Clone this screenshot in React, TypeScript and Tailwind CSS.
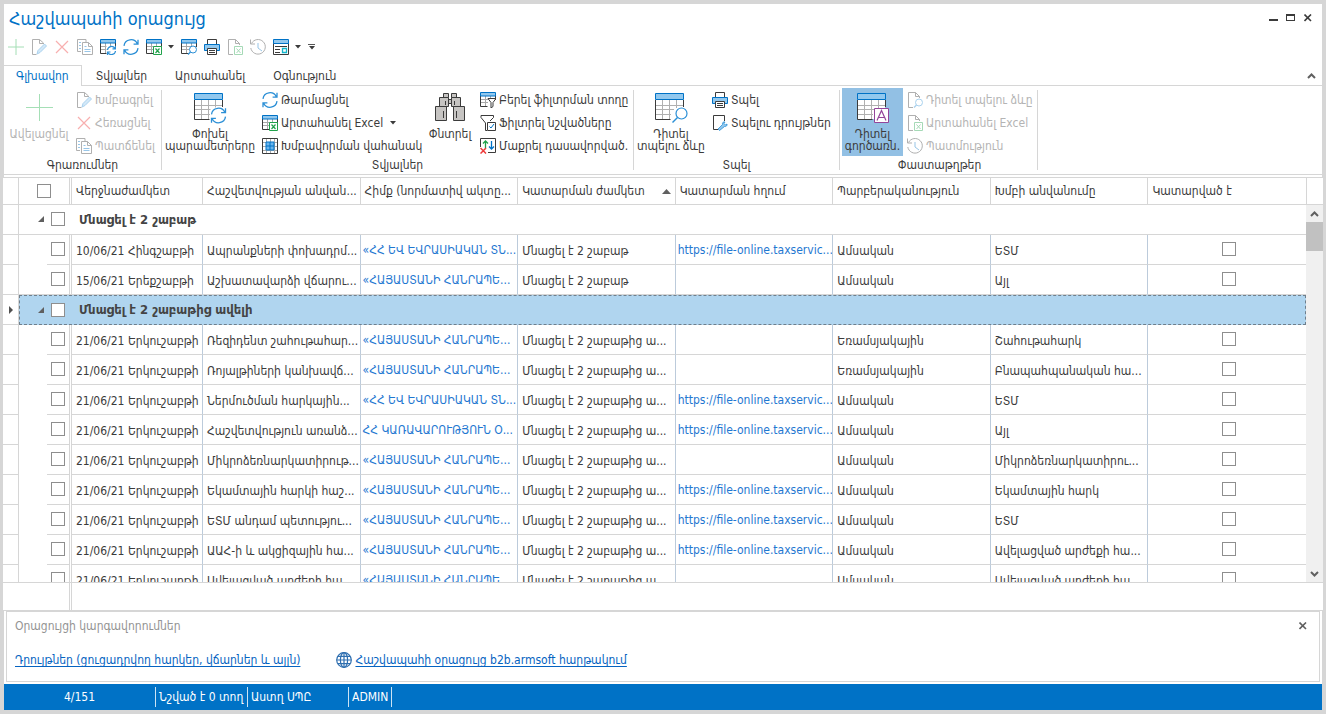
import React, { useState } from 'react';
import clsx from 'clsx';

const INK = '#3b3b3b';
const BLUE = '#0072c6';
const SKY = '#92c8ee';
const ARC = '#2b8fd6';

type IconProps = { className?: string };

const Svg: React.FC<{ size?: number; className?: string; children: React.ReactNode }> = ({
  size = 16,
  className = '',
  children,
}) => (
  <svg
    width={size}
    height={size}
    viewBox={`0 0 ${size} ${size}`}
    fill="none"
    stroke={INK}
    aria-hidden="true"
    className={clsx('shrink-0', className)}
  >
    {children}
  </svg>
);

const SyncArrows = () => (
  <g stroke={ARC} strokeWidth="1.3">
    <path d="M1 6.8A7 7 0 0 1 14.3 4.8M15 .8v4.4h-4.4" />
    <path d="M15 9.2A7 7 0 0 1 1.7 11.2M1 15.2v-4.4h4.4" />
  </g>
);

const SmallTable = () => (
  <>
    <path d="M5.5 4v10M10.5 4v4M1 7.5h14M1 10.5h7" stroke="#a9a9a9" />
    <path d="M.5 4v10.5h7M15.5 4v4" />
    <path d="M.5 .5h15v3.5h-15z" fill={SKY} stroke={BLUE} />
  </>
);

const BigTable = () => (
  <>
    <path d="M8.5 9v19M15.5 9v19M22.5 9v8M2 14.5h27M2 18.5h18M2 23.5h15" stroke="#b0b0b0" />
    <path d="M1.5 9v19.500h15M29.500 9v7" />
    <path d="M1.500 2.500h28v6h-28z" fill={SKY} stroke={BLUE} />
  </>
);

const PlusIcon = () => (
  <Svg>
    <path d="M8 0v16M0 8h16" stroke="#21b04b" />
  </Svg>
);

const BigPlusIcon = () => (
  <Svg size={32}>
    <path d="M16.500 3v27M3 16.500h27" stroke="#21b04b" />
  </Svg>
);

const EditIcon = () => (
  <Svg>
    <path d="M12.500 5v-1l-4-3.500h-7v15h4" />
    <path d="M8.500 .5v4h4" />
    <path d="M6 15l1-3.500 6.500-6.500 2 2-6.500 6.500z" fill={SKY} stroke={ARC} />
  </Svg>
);

const CrossIcon = () => (
  <Svg>
    <path d="M2 2l12 12M14 2L2 14" stroke="#ee3a3a" strokeWidth="1.200" />
  </Svg>
);

const CopyIcon = () => (
  <Svg>
    <path d="M9 3.500V.5H.5v12H4" />
    <path d="M2 3.500h2M2 6.500h2M2 9.500h2" stroke={BLUE} />
    <path d="M5.500 3.500h6l4 4v8h-10zM11.500 3.500v4h4" />
    <path d="M7.500 7.500h2M7.500 10.500h6M7.500 12.500h6" stroke={BLUE} />
  </Svg>
);

const TableSyncIcon = () => (
  <Svg>
    <SmallTable />
    <path d="M6.500 7H16v9H6.500z" fill="#fff" stroke="none" />
    <g stroke={ARC} strokeWidth="1.200">
      <path d="M7.500 11a4 4 0 0 1 7.300-1.800M15.500 6.800v3h-3" />
      <path d="M15.500 12a4 4 0 0 1-7.300 1.800M7.500 16v-3h3" />
    </g>
  </Svg>
);

const SyncIcon = () => (
  <Svg>
    <SyncArrows />
  </Svg>
);

const TableExcelIcon = () => (
  <Svg>
    <SmallTable />
    <path d="M7.500 7.500h8v8h-8z" fill="#fff" stroke="#21a24b" />
    <path d="M9.500 9.500l4 4.500M13.500 9.500l-4 4.500" stroke="#21a24b" strokeWidth="1.200" />
  </Svg>
);

const TablePreviewIcon = () => (
  <Svg>
    <SmallTable />
    <circle cx="12" cy="10.500" r="3.500" fill="#fff" stroke={ARC} />
    <path d="M9.500 13l-2.500 2.500" stroke={ARC} strokeWidth="1.300" />
  </Svg>
);

const TableFilterIcon = () => (
  <Svg>
    <SmallTable />
    <path d="M8 6.500h8l-3 4v4l-2 1.500v-5.500z" fill="#fff" />
  </Svg>
);

const PrintIcon = () => (
  <Svg>
    <path d="M3.500 5V.5h9V5" />
    <path d="M.5 5.500h15v6h-15z" fill={SKY} stroke={BLUE} />
    <path d="M3.500 9.500h9v6h-9z" fill="#fff" />
    <path d="M5 11.500h6M5 13.500h6" />
  </Svg>
);

const FileExcelIcon = () => (
  <Svg>
    <path d="M6 15.500H1.500V.5h7l4 4V6M8.500 .5v4h4" />
    <path d="M7.500 7.500h8v8h-8z" fill="#fff" stroke="#21a24b" />
    <path d="M9.500 9.500l4 4.500M13.500 9.500l-4 4.500" stroke="#21a24b" />
  </Svg>
);

const FilePreviewIcon = () => (
  <Svg>
    <path d="M6 15.500H1.500V.5h7l4 4V6M8.500 .5v4h4" />
    <circle cx="12" cy="10.500" r="3.500" stroke={ARC} />
    <path d="M9.500 13L7 15.500" stroke={ARC} strokeWidth="1.300" />
  </Svg>
);

const HistoryIcon = () => (
  <Svg>
    <path d="M1.500 4.500A7.300 7.300 0 1 1 .8 9M.5 .5v4.500H5" />
    <path d="M8 4v5l4 3" stroke={BLUE} />
  </Svg>
);

const CardIcon = () => (
  <Svg>
    <path d="M.5 4v11.500h15V4M2 7.500h12M2 10.500h5M2 13.500h5" />
    <path d="M.5 .5h15v4h-15z" fill={SKY} stroke={BLUE} />
    <path d="M9.500 9.500h4v4h-4z" fill="#fff" stroke="#12b5cb" strokeWidth="1.300" />
  </Svg>
);

const GroupPanelIcon = () => (
  <Svg>
    <path d="M4.500 0v16M8.500 0v16M12.500 0v16M0 4.500h16M0 8.500h16M0 12.500h16" stroke="#a9a9a9" />
    <path d="M.5 .5h15v15H.5z" />
    <path d="M4 4h8v8H4z" fill="#6bb5ec" stroke={BLUE} />
    <path d="M8 4v8M4 8h8" stroke={BLUE} />
  </Svg>
);

const FilterCheckIcon = () => (
  <Svg>
    <path d="M7 15.500H5.500V8L1 2.500V.5h12.500v2L10 6" />
    <path d="M7.500 7.500h8v8h-8z" fill="#fff" />
    <path d="M9.500 11.500l1.500 1.500 3-4" stroke={BLUE} />
  </Svg>
);

const ClearSortIcon = () => (
  <Svg>
    <path d="M.5 9V.5h15v14H8" />
    <path d="M5.500 10V3M3 5.500L5.500 3 8 5.500" stroke="#21a24b" strokeWidth="1.300" />
    <path d="M11.500 3v8M9 8.500l2.500 2.500L14 8.500" stroke={BLUE} strokeWidth="1.300" />
    <path d="M.5 10l5.500 5.500M6 10L.5 15.500" stroke="#ee3a3a" strokeWidth="1.500" />
  </Svg>
);

const PageSetupIcon = () => (
  <Svg>
    <path d="M6 14.500H1.500V.5h11V6" />
    <path
      d="M7.500 15.500l-1.500-1.500 4.500-4.500c-.5-2 1-3 2.500-2.500l-1 1.500 1.500 1.500 1.500-1c.5 1.500-1 3-2.500 2.500z"
      fill={SKY}
      stroke={ARC}
      strokeWidth=".8"
    />
  </Svg>
);

const BigTableSyncIcon = () => (
  <Svg size={34}>
    <BigTable />
    <g transform="translate(17.500 16.500)">
      <rect width="16" height="16" fill="#fff" stroke="none" />
      <SyncArrows />
    </g>
  </Svg>
);

const BigTablePreviewIcon = () => (
  <Svg size={34}>
    <BigTable />
    <circle cx="27.500" cy="22.500" r="5.500" fill="#fff" stroke={ARC} strokeWidth="1.200" />
    <path d="M23.500 26.500l-5 5" stroke={ARC} strokeWidth="1.500" />
  </Svg>
);

const BigTableLetterIcon = () => (
  <Svg size={34}>
    <path d="M2 9h27v19H2z" fill="#fff" stroke="none" />
    <BigTable />
    <path d="M18.500 17.500h14v14h-14z" fill="#fff" stroke="#93459a" />
    <path d="M21 29.500l4.500-10 4.500 10M22.500 26.500h6" stroke="#93459a" strokeWidth="1.200" />
  </Svg>
);

const BinocularsIcon = () => (
  <Svg size={32}>
    <g fill="#c6c4c2">
      <path d="M9.500 2.500h5v4h-5zM17.500 2.500h5v4h-5z" />
      <path d="M14.500 8.500h3v4h-3z" />
      <path d="M5.500 6.500h9v9h-9zM17.500 6.500h9v9h-9z" />
      <path d="M1.500 15.500h11v14h-11zM19.500 15.500h11v14h-11z" />
    </g>
    <path d="M9.500 20v7M22.500 20v7M11.500 10v4M20.500 10v4" />
  </Svg>
);

const GlobeIcon = () => (
  <Svg>
    <g stroke="#2f6fb0" strokeWidth="1.200">
      <circle cx="8" cy="8" r="7.300" />
      <ellipse cx="8" cy="8" rx="3.600" ry="7.300" />
      <path d="M8 .7v14.600M.7 8h14.600M1.800 4.300h12.400M1.800 11.700h12.400" />
    </g>
  </Svg>
);

const Caret: React.FC<IconProps> = ({ className = '' }) => (
  <svg width="6" height="4" viewBox="0 0 6 4" fill={INK} aria-hidden="true" className={clsx('shrink-0', className)}>
    <path d="M0 0h6L3 3.500z" />
  </svg>
);

const CloseGlyph: React.FC<{ color?: string }> = ({ color = INK }) => (
  <svg width="8" height="8" viewBox="0 0 8 8" stroke={color} strokeWidth="1.600" aria-hidden="true">
    <path d="M.5 .5l6.500 6.500M7 .5L.5 7" />
  </svg>
);

const Chevron: React.FC<IconProps> = ({ className = '' }) => (
  <svg width="9" height="6" viewBox="0 0 9 6" fill="none" stroke="#606060" strokeWidth="2" aria-hidden="true" className={className}>
    <path d="M1 5l3.500-3.500L8 5" />
  </svg>
);

const CheckBox: React.FC<{ label: string }> = ({ label }) => (
  <input
    type="checkbox"
    aria-label={label}
    className="block size-3.5 shrink-0 appearance-none border border-[#8e8e8e] bg-white checked:bg-[#0072c6]"
  />
);

const quickTools = [
  { label: 'Ավելացնել', Icon: PlusIcon, disabled: true },
  { label: 'Խմբագրել', Icon: EditIcon, disabled: true },
  { label: 'Հեռացնել', Icon: CrossIcon, disabled: true },
  { label: 'Պատճենել', Icon: CopyIcon, disabled: true },
  { label: 'Փոխել պարամետրերը', Icon: TableSyncIcon },
  { label: 'Թարմացնել', Icon: SyncIcon },
  { label: 'Արտահանել Excel', Icon: TableExcelIcon, menu: true },
  { label: 'Դիտել տպելու ձևը', Icon: TablePreviewIcon },
  { label: 'Տպել', Icon: PrintIcon },
  { label: 'Արտահանել Excel', Icon: FileExcelIcon, disabled: true },
  { label: 'Պատմություն', Icon: HistoryIcon, disabled: true },
  { label: 'Դիտել', Icon: CardIcon, menu: true },
];

const tabs = ['Գլխավոր', 'Տվյալներ', 'Արտահանել', 'Օգնություն'];

interface RibbonButtonProps {
  Icon: React.FC;
  label: string;
  disabled?: boolean;
  menu?: boolean;
}

const SmallButton: React.FC<RibbonButtonProps> = ({ Icon, label, disabled, menu }) => (
  <button
    disabled={disabled}
    className="flex h-[23px] items-center gap-[3px] whitespace-nowrap text-left disabled:text-[#b4b4b4]"
  >
    <span className={clsx('flex', disabled && 'opacity-40')}>
      <Icon />
    </span>
    {label}
    {menu && <Caret className="ml-1" />}
  </button>
);

interface BigButtonProps {
  Icon: React.FC;
  lines: string[];
  className: string;
  disabled?: boolean;
  active?: boolean;
}

const BigButton: React.FC<BigButtonProps> = ({ Icon, lines, className, disabled, active }) => (
  <button
    disabled={disabled}
    aria-pressed={active}
    className={clsx(
      'flex h-[68px] flex-col items-center whitespace-nowrap pt-[3px] leading-3 disabled:text-[#b4b4b4]',
      active && 'bg-[#92c0e4]',
      className
    )}
  >
    <span className={clsx('flex h-[37px]', disabled && 'opacity-40')}>
      <Icon />
    </span>
    {lines.map((line) => (
      <span key={line}>{line}</span>
    ))}
  </button>
);

const RibbonGroup: React.FC<{ title: string; className: string; children: React.ReactNode }> = ({
  title,
  className,
  children,
}) => (
  <>
    <section className={clsx('shrink-0', className)}>
      <div className="flex h-[69px]">{children}</div>
      <h2 className="text-center leading-4">{title}</h2>
    </section>
    <div className="mt-0.5 h-20 w-px shrink-0 bg-[#d6d6d6]" />
  </>
);

const columns = [
  'Վերջնաժամկետ',
  'Հաշվետվության անվան...',
  'Հիմք (նորմատիվ ակտը...',
  'Կատարման ժամկետ',
  'Կատարման հղում',
  'Պարբերականություն',
  'Խմբի անվանումը',
  'Կատարված է',
];

const URL_TEXT = 'https://file-online.taxservic...';
const BASIS_RA = '«ՀԱՅԱՍՏԱՆԻ ՀԱՆՐԱՊԵ...';
const BASIS_EAEU = '«ՀՀ ԵՎ ԵՎՐԱՍԻԱԿԱՆ ՏՆ...';

interface Row {
  date: string;
  name: string;
  basis: string;
  due: string;
  url?: boolean;
  period: string;
  group: string;
}

const MONTHLY = 'Ամսական';
const QUARTERLY = 'Եռամսյակային';
const MON = '21/06/21 Երկուշաբթի';
const TWO_WEEKS = 'Մնացել է 2 շաբաթ';
const MORE = 'Մնացել է 2 շաբաթից ա...';

const groups: { title: string; selected?: boolean; rows: Row[] }[] = [
  {
    title: 'Մնացել է 2 շաբաթ',
    rows: [
      { date: '10/06/21 Հինգշաբթի', name: 'Ապրանքների փոխադրմ...', basis: BASIS_EAEU, due: TWO_WEEKS, url: true, period: MONTHLY, group: 'ԵՏՄ' },
      { date: '15/06/21 Երեքշաբթի', name: 'Աշխատավարձի վճարու...', basis: BASIS_RA, due: TWO_WEEKS, period: MONTHLY, group: 'Այլ' },
    ],
  },
  {
    title: 'Մնացել է 2 շաբաթից ավելի',
    selected: true,
    rows: [
      { date: MON, name: 'Ռեզիդենտ շահութահար...', basis: BASIS_RA, due: MORE, period: QUARTERLY, group: 'Շահութահարկ' },
      { date: MON, name: 'Ռոյալթիների կանխավճ...', basis: BASIS_RA, due: MORE, period: QUARTERLY, group: 'Բնապահպանական հա...' },
      { date: MON, name: 'Ներմուծման հարկային...', basis: BASIS_EAEU, due: MORE, url: true, period: MONTHLY, group: 'ԵՏՄ' },
      { date: MON, name: 'Հաշվետվություն առանձ...', basis: 'ՀՀ ԿԱՌԱՎԱՐՈՒԹՅՈՒՆ Օ...', due: MORE, url: true, period: MONTHLY, group: 'Այլ' },
      { date: MON, name: 'Միկրոձեռնարկատիրութ...', basis: BASIS_RA, due: MORE, period: MONTHLY, group: 'Միկրոձեռնարկատիրու...' },
      { date: MON, name: 'Եկամտային հարկի հաշ...', basis: BASIS_RA, due: MORE, url: true, period: MONTHLY, group: 'Եկամտային հարկ' },
      { date: MON, name: 'ԵՏՄ անդամ պետությու...', basis: BASIS_RA, due: MORE, url: true, period: MONTHLY, group: 'ԵՏՄ' },
      { date: MON, name: 'ԱԱՀ-ի և ակցիզային հա...', basis: BASIS_RA, due: MORE, url: true, period: MONTHLY, group: 'Ավելացված արժեքի հա...' },
      { date: MON, name: 'Ավելացված արժեքի հա...', basis: BASIS_RA, due: MORE, period: MONTHLY, group: 'Ավելացված արժեքի հա...' },
    ],
  },
];

const cell = 'h-[30px] overflow-hidden whitespace-nowrap border-b border-r border-b-[#d6d6d6] border-r-[#bccbdb] px-1 pt-0.5';
const linkCell = 'h-[30px] overflow-hidden whitespace-nowrap border-b border-r border-b-[#d6d6d6] border-r-[#bccbdb] px-0.5';
const link = 'text-[#1f78d1] hover:underline';

const DataRow: React.FC<{ row: Row; last: boolean }> = ({ row, last }) => (
  <tr>
    <td className="border-b border-r border-[#d6d6d6]" />
    <td
      className={clsx(
        'h-[30px] border-r-3 border-double border-[#d6d6d6] p-0',
        last && 'border-b [border-bottom-style:solid]'
      )}
    >
      <div className={clsx('ml-7 flex items-center border-[#d6d6d6] pb-px pl-1', last ? 'h-[29px]' : 'h-[30px] border-b')}>
        <CheckBox label={row.name} />
      </div>
    </td>
    <td className={cell}>{row.date}</td>
    <td className={cell}>{row.name}</td>
    <td className={linkCell}>
      <a href="#basis" className={link}>{row.basis}</a>
    </td>
    <td className={cell}>{row.due}</td>
    <td className={linkCell}>
      {row.url && <a href="#report" className={link}>{URL_TEXT}</a>}
    </td>
    <td className={cell}>{row.period}</td>
    <td className={cell}>{row.group}</td>
    <td className="border-b border-[#d6d6d6] p-0 pb-px">
      <div className="flex justify-center pl-1">
        <CheckBox label={`Կատարված է ${row.name}`} />
      </div>
    </td>
  </tr>
);

const GroupRow: React.FC<{ title: string; selected?: boolean }> = ({ title, selected }) => (
  <tr>
    <td className="border-b border-r border-[#d6d6d6] p-0">
      {selected && (
        <svg width="4" height="8" viewBox="0 0 4 8" fill="#505050" className="ml-1.5" aria-hidden="true">
          <path d="M0 0l4 4-4 4z" />
        </svg>
      )}
    </td>
    <td
      colSpan={9}
      className={clsx(
        'h-[30px] p-0',
        selected ? 'border border-dashed border-[#6f7f8c] bg-[#b0d5ef]' : 'border-b border-[#d6d6d6]'
      )}
    >
      <div className={clsx('flex items-center text-[13px] font-bold text-[#444]', selected ? 'pl-[18px]' : 'pl-[19px]')}>
        <svg width="6" height="6" viewBox="0 0 6 6" fill="#606060" className="mr-[7px]" aria-hidden="true">
          <path d="M6 0v6H0z" />
        </svg>
        <CheckBox label={title} />
        <span className="ml-3.5">{title}</span>
      </div>
    </td>
  </tr>
);

export default function App() {
  const [activeTab, setActiveTab] = useState(tabs[0]);

  return (
    <div className="flex h-screen flex-col overflow-hidden bg-[#d6d6d6] p-1 font-['DejaVu_Sans_Condensed','DejaVu_Sans',sans-serif] text-xs text-[#3b3b3b]">
      <header className="shrink-0 bg-white">
        {/* Title bar */}
        <div className="flex h-8 items-start justify-between">
          <h1 className="pl-[5px] pt-[3px] text-lg leading-6 text-[#0072c6]">Հաշվապահի օրացույց</h1>
          <div className="flex items-start gap-2 pr-2.5 pt-2.5">
            <button aria-label="Minimize" className="flex h-[7px] w-[9px] items-end">
              <span className="h-0.5 w-full bg-[#3b3b3b]" />
            </button>
            <button aria-label="Maximize" className="h-[7px] w-[9px] border border-t-2 border-[#3b3b3b]" />
            <button aria-label="Close" className="ml-px">
              <CloseGlyph />
            </button>
          </div>
        </div>

        {/* Quick access toolbar */}
        <div className="flex h-[29px] items-start gap-[7px] pl-1 pt-[3px]">
          {quickTools.map(({ label, Icon, disabled, menu }, i) => (
            <button key={i} aria-label={label} disabled={disabled} className="flex items-center disabled:opacity-40">
              <Icon />
              {menu && <Caret className="ml-1.5" />}
            </button>
          ))}
          <button aria-label="More" className="flex h-4 flex-col items-center justify-center gap-px">
            <span className="h-px w-[7px] bg-[#555]" />
            <Caret />
          </button>
        </div>

        {/* Tabs */}
        <nav className="flex h-[21px] items-stretch border-b border-[#d6d6d6]">
          {tabs.map((tab) => (
            <button
              key={tab}
              onClick={() => setActiveTab(tab)}
              className={clsx(
                'leading-5',
                tab === activeTab
                  ? '-mb-px border-r border-t border-[#d6d6d6] bg-white px-3 text-[#0072c6]'
                  : 'px-3.5 pt-px'
              )}
            >
              {tab}
            </button>
          ))}
          <button aria-label="Collapse" className="ml-auto mr-1.5 pt-0.5">
            <Chevron />
          </button>
        </nav>

        {/* Ribbon */}
        <div className="flex h-[89px] items-start overflow-hidden border-b border-[#d6d6d6] pt-0.5">
          <RibbonGroup title="Գրառումներ" className="w-[157px]">
            <BigButton Icon={BigPlusIcon} lines={['Ավելացնել']} className="mr-0.5 w-[70px]" disabled />
            <div>
              <SmallButton Icon={EditIcon} label="Խմբագրել" disabled />
              <SmallButton Icon={CrossIcon} label="Հեռացնել" disabled />
              <SmallButton Icon={CopyIcon} label="Պատճենել" disabled />
            </div>
          </RibbonGroup>
          <RibbonGroup title="Տվյալներ" className="w-[471px]">
            <BigButton Icon={BigTableSyncIcon} lines={['Փոխել', 'պարամետրերը']} className="mr-1 w-24" />
            <div className="w-[162px]">
              <SmallButton Icon={SyncIcon} label="Թարմացնել" />
              <SmallButton Icon={TableExcelIcon} label="Արտահանել Excel" menu />
              <SmallButton Icon={GroupPanelIcon} label="Խմբավորման վահանակ" />
            </div>
            <BigButton Icon={BinocularsIcon} lines={['Փնտրել']} className="mr-1 w-[52px]" />
            <div>
              <SmallButton Icon={TableFilterIcon} label="Բերել ֆիլտրման տողը" />
              <SmallButton Icon={FilterCheckIcon} label="Ֆիլտրել նշվածները" />
              <SmallButton Icon={ClearSortIcon} label="Մաքրել դասավորված." />
            </div>
          </RibbonGroup>
          <RibbonGroup title="Տպել" className="w-[205px]">
            <BigButton Icon={BigTablePreviewIcon} lines={['Դիտել', 'տպելու ձևը']} className="mr-1 w-[74px]" />
            <div>
              <SmallButton Icon={PrintIcon} label="Տպել" />
              <SmallButton Icon={PageSetupIcon} label="Տպելու դրույթներ" />
            </div>
          </RibbonGroup>
          <RibbonGroup title="Փաստաթղթեր" className="w-[197px] pl-0.5">
            <BigButton Icon={BigTableLetterIcon} lines={['Դիտել', 'գործառն.']} className="mr-1 w-[61px]" active />
            <div>
              <SmallButton Icon={FilePreviewIcon} label="Դիտել տպելու ձևը" disabled />
              <SmallButton Icon={FileExcelIcon} label="Արտահանել Excel" disabled />
              <SmallButton Icon={HistoryIcon} label="Պատմություն" disabled />
            </div>
          </RibbonGroup>
        </div>
        <div className="h-0.5" />
      </header>

      {/* Grid */}
      <main className="-mx-px flex min-h-0 flex-1 border-t border-[#d6d6d6] bg-white">
        <div className="min-w-0 flex-1 overflow-hidden">
          <table className="w-full table-fixed border-separate border-spacing-0 text-left">
            <colgroup>
              <col className="w-4" />
              <col className="w-[53px]" />
              <col className="w-[131px]" />
              {columns.slice(1).map((title) => (
                <col key={title} />
              ))}
            </colgroup>
            <thead>
              <tr>
                <th className="border-b border-r border-[#d6d6d6]" />
                <th className="h-[27px] border-b border-r-3 border-[#d6d6d6] p-0 [border-right-style:double]">
                  <div className="flex pl-[18px]">
                    <CheckBox label="Ընտրել բոլորը" />
                  </div>
                </th>
                {columns.map((title, i) => (
                  <th
                    key={title}
                    className={clsx(
                      'h-[27px] overflow-hidden whitespace-nowrap border-b border-[#d6d6d6] px-1 py-0 font-normal',
                      i < columns.length - 1 && 'border-r'
                    )}
                  >
                    <div className="flex items-center justify-between">
                      {title}
                      {i === 3 && (
                        <svg width="9" height="5" viewBox="0 0 9 5" fill="#606060" aria-hidden="true">
                          <path d="M4.500 0L9 5H0z" />
                        </svg>
                      )}
                    </div>
                  </th>
                ))}
              </tr>
            </thead>
            <tbody>
              {groups.map(({ title, selected, rows }) => (
                <React.Fragment key={title}>
                  <GroupRow title={title} selected={selected} />
                  {rows.map((row, i) => (
                    <DataRow key={row.name} row={row} last={i === rows.length - 1} />
                  ))}
                </React.Fragment>
              ))}
            </tbody>
          </table>
        </div>
        <div className="flex w-[17px] flex-col">
          <div className="h-[27px] border-b border-l border-[#d6d6d6]" />
          <div className="flex flex-1 flex-col items-center bg-[#f0f0f0]">
            <button aria-label="Scroll up" className="flex h-[17px] items-center">
              <Chevron />
            </button>
            <div className="h-[29px] w-full bg-[#c1c1c1]" />
            <button aria-label="Scroll down" className="mt-auto flex h-[17px] items-center">
              <Chevron className="rotate-180" />
            </button>
          </div>
        </div>
      </main>
      <div className="-mx-px h-[29px] shrink-0 border-y border-[#d6d6d6] bg-white">
        <div className="h-full w-[69px] border-r-3 border-[#d6d6d6] [border-right-style:double]" />
      </div>

      {/* Calendar settings */}
      <div className="shrink-0 bg-white px-0.5 pb-0.5">
        <section className="h-[71px] border border-[#d6d6d6] px-2">
          <div className="flex h-[27px] items-center justify-between text-[#939393]">
            <h2>Օրացույցի կարգավորումներ</h2>
            <button aria-label="Close" className="mr-1">
              <CloseGlyph color="#606060" />
            </button>
          </div>
          <div className="flex items-center gap-9 pt-[13px] text-[#0563c1]">
            <a href="#settings" className="underline underline-offset-2">
              Դրույթներ (ցուցադրվող հարկեր, վճարներ և այլն)
            </a>
            <a href="#b2b" className="flex items-center gap-[3px] underline underline-offset-2">
              <GlobeIcon />
              Հաշվապահի օրացույց b2b.armsoft հարթակում
            </a>
          </div>
        </section>
      </div>

      {/* Status bar */}
      <footer className="flex h-[26px] shrink-0 items-center bg-[#0072c6] leading-5 text-white">
        <span className="w-[152px] border-r border-white/80 text-center">4/151</span>
        <span className="w-[92px] whitespace-nowrap border-r border-white/80 px-[3px]">Նշված է 0 տող</span>
        <span className="w-[101px] border-r border-white/80 px-[3px]">Աստղ ՍՊԸ</span>
        <span className="border-r border-white/80 px-[3px]">ADMIN</span>
      </footer>
    </div>
  );
}
